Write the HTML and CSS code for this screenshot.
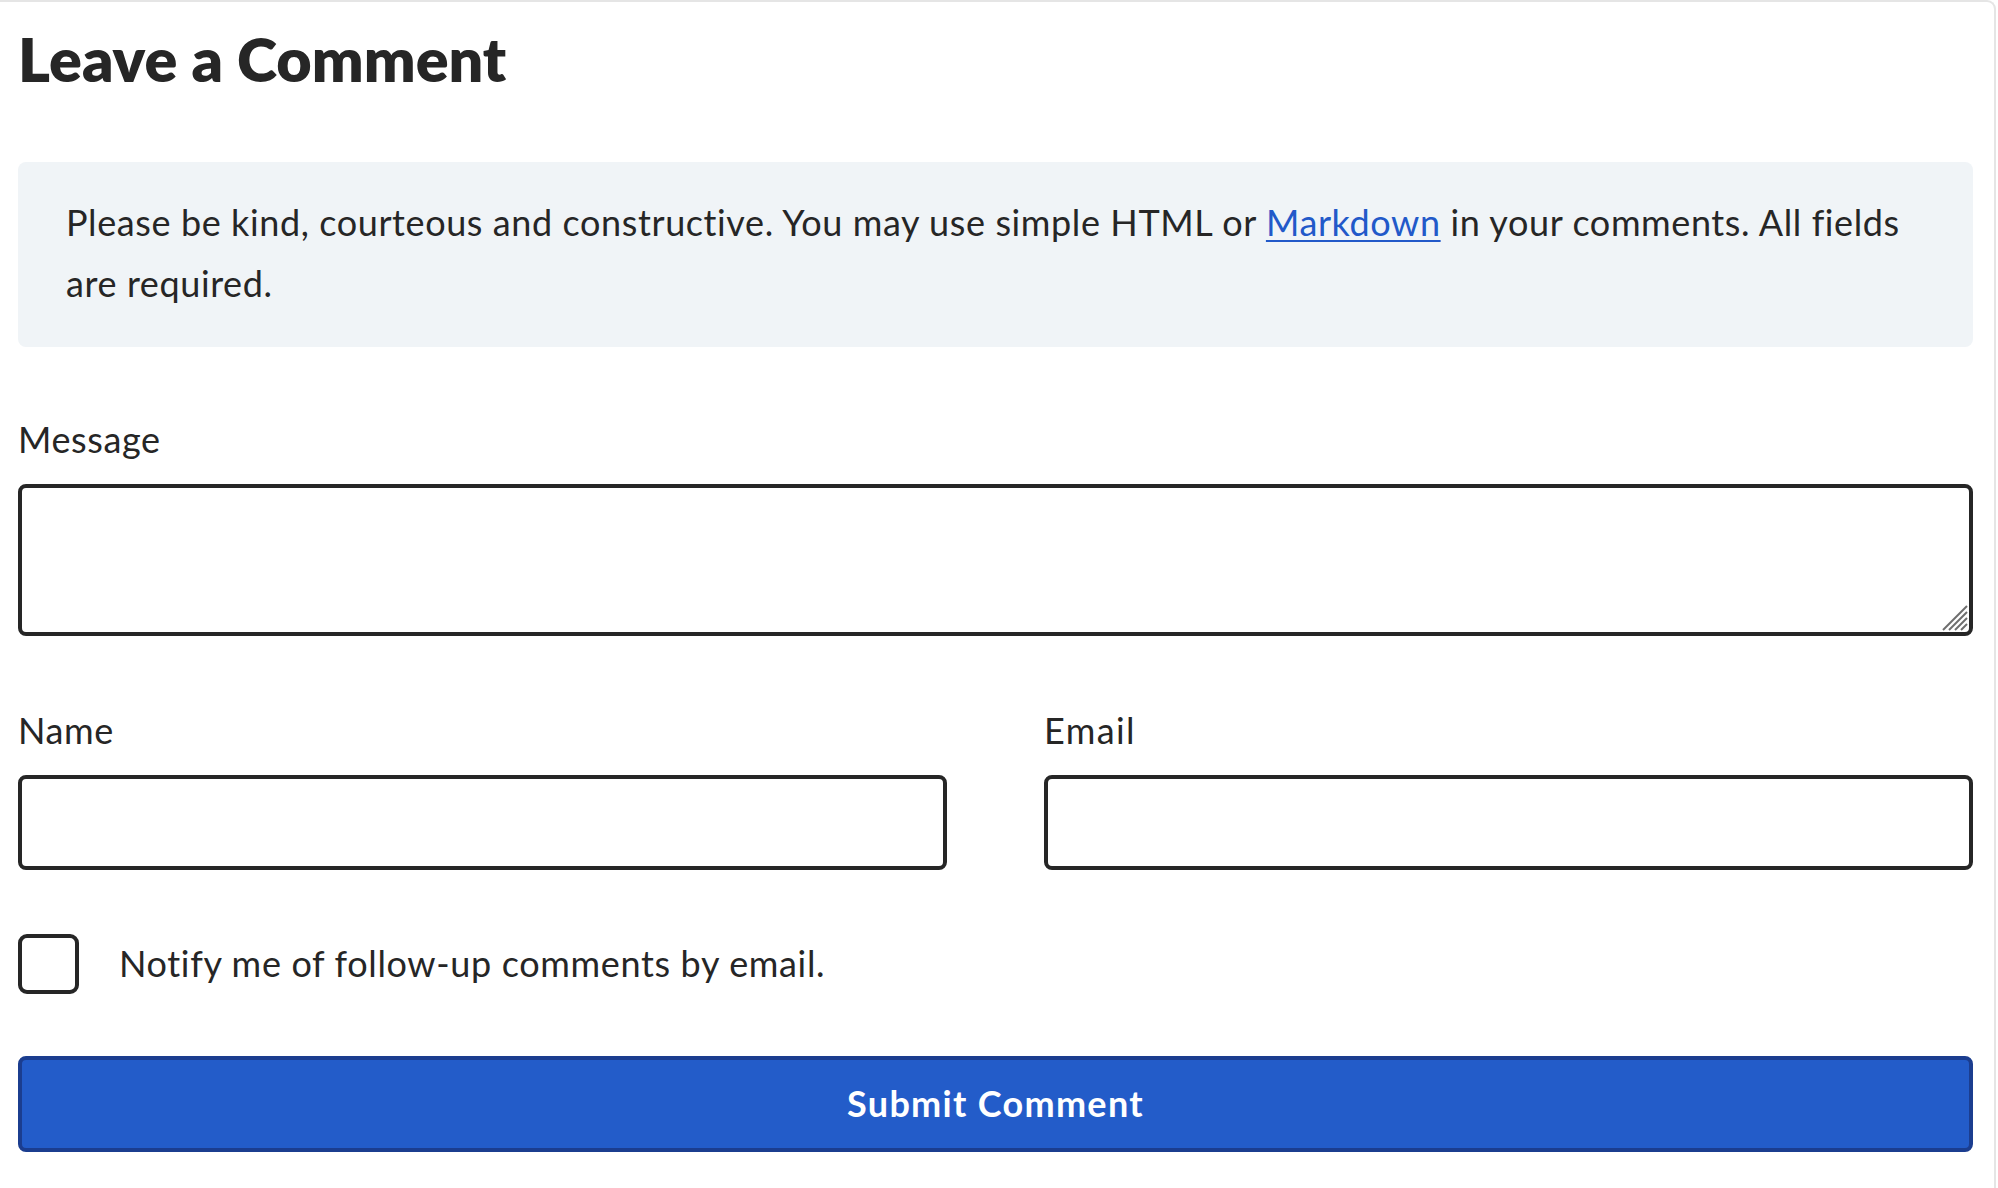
FILE: index.html
```html
<!DOCTYPE html>
<html lang="en">
<head>
<meta charset="utf-8">
<title>Leave a Comment</title>
<link rel="stylesheet" href="styles.css">
</head>
<body>
<div class="card">
  <h1 class="title">Leave a Comment</h1>
  <p class="notice">Please be kind, courteous and constructive. You may use simple HTML or <a class="notice-link" href="#">Markdown</a> in your comments. All fields are required.</p>
  <form class="form">
    <div class="field field-message">
      <label class="label" for="msg">Message</label>
      <div class="textarea-wrap">
        <textarea class="textarea" id="msg"></textarea>
        <svg class="grip" width="26" height="26" viewBox="0 0 26 26" aria-hidden="true">
          <line x1="1" y1="25" x2="25" y2="1"/>
          <line x1="7" y1="25" x2="25" y2="7"/>
          <line x1="13" y1="25" x2="25" y2="13"/>
          <line x1="19" y1="25" x2="25" y2="19"/>
        </svg>
      </div>
    </div>
    <div class="row">
      <div class="field">
        <label class="label" for="name">Name</label>
        <input class="input" id="name" type="text">
      </div>
      <div class="field">
        <label class="label label-email" for="email">Email</label>
        <input class="input" id="email" type="email">
      </div>
    </div>
    <label class="check">
      <span class="check-box"></span>
      <span class="check-text">Notify me of follow-up comments by email.</span>
    </label>
    <button class="submit" type="button">Submit Comment</button>
  </form>
</div>
</body>
</html>
```
FILE: styles.css
```css
html, body {
  margin: 0;
  padding: 0;
  background: #ffffff;
}

body {
  font-family: "Lato", "Liberation Sans", sans-serif;
  color: #262626;
}

.card {
  box-sizing: border-box;
  min-height: 100vh;
  margin-right: 2px;
  border-top: 2px solid #e5e5e5;
  border-right: 2px solid #e5e5e5;
  border-top-right-radius: 9px;
  padding: 24px 21px 0 18px;
}

.title {
  margin: 0;
  font-size: 61px;
  line-height: 66px;
  font-weight: 800;
  letter-spacing: 0;
  color: #262626;
}

.notice {
  margin: 70px 0 0;
  padding: 30px 30px 33px 48px;
  background: #f0f4f7;
  border-radius: 8px;
  font-size: 36px;
  line-height: 61px;
  letter-spacing: 0.6px;
}

.notice-link {
  color: #2259c9;
  text-decoration: underline;
  text-decoration-thickness: 2px;
  text-underline-offset: 4px;
}

.form {
  display: flex;
  flex-direction: column;
}

.field {
  display: flex;
  flex-direction: column;
}

.field-message {
  margin-top: 72px;
}

.label {
  font-size: 36px;
  line-height: 40px;
  letter-spacing: 0.6px;
  margin-bottom: 25px;
}

.label-email {
  letter-spacing: 1.4px;
}

.textarea-wrap {
  position: relative;
  display: flex;
}

.textarea {
  box-sizing: border-box;
  width: 100%;
  height: 152px;
  margin: 0;
  border: 4px solid #262626;
  border-radius: 8px;
  resize: none;
  font: inherit;
  background: #fff;
}

.grip {
  position: absolute;
  right: 5px;
  bottom: 5px;
  stroke: #6e6e6e;
  stroke-width: 2;
}

.row {
  display: grid;
  grid-template-columns: 1fr 1fr;
  column-gap: 97px;
  margin-top: 74px;
}

.input {
  box-sizing: border-box;
  width: 100%;
  height: 95px;
  margin: 0;
  border: 4px solid #262626;
  border-radius: 8px;
  font: inherit;
  background: #fff;
}

.check {
  display: flex;
  align-items: center;
  gap: 40px;
  margin-top: 64px;
}

.check-box {
  box-sizing: border-box;
  flex: none;
  width: 61px;
  height: 60px;
  border: 4px solid #262626;
  border-radius: 9px;
}

.check-text {
  font-size: 36px;
  line-height: 40px;
  letter-spacing: 0.65px;
  padding-bottom: 2px;
}

.submit {
  box-sizing: border-box;
  margin-top: 62px;
  width: 100%;
  height: 96px;
  padding: 0 0 3px;
  border: 4px solid #1b3d8f;
  border-radius: 8px;
  background: #235cc9;
  color: #ffffff;
  font-family: "Lato", "Liberation Sans", sans-serif;
  font-size: 36px;
  font-weight: 700;
  letter-spacing: 1.3px;
  cursor: pointer;
}
```
